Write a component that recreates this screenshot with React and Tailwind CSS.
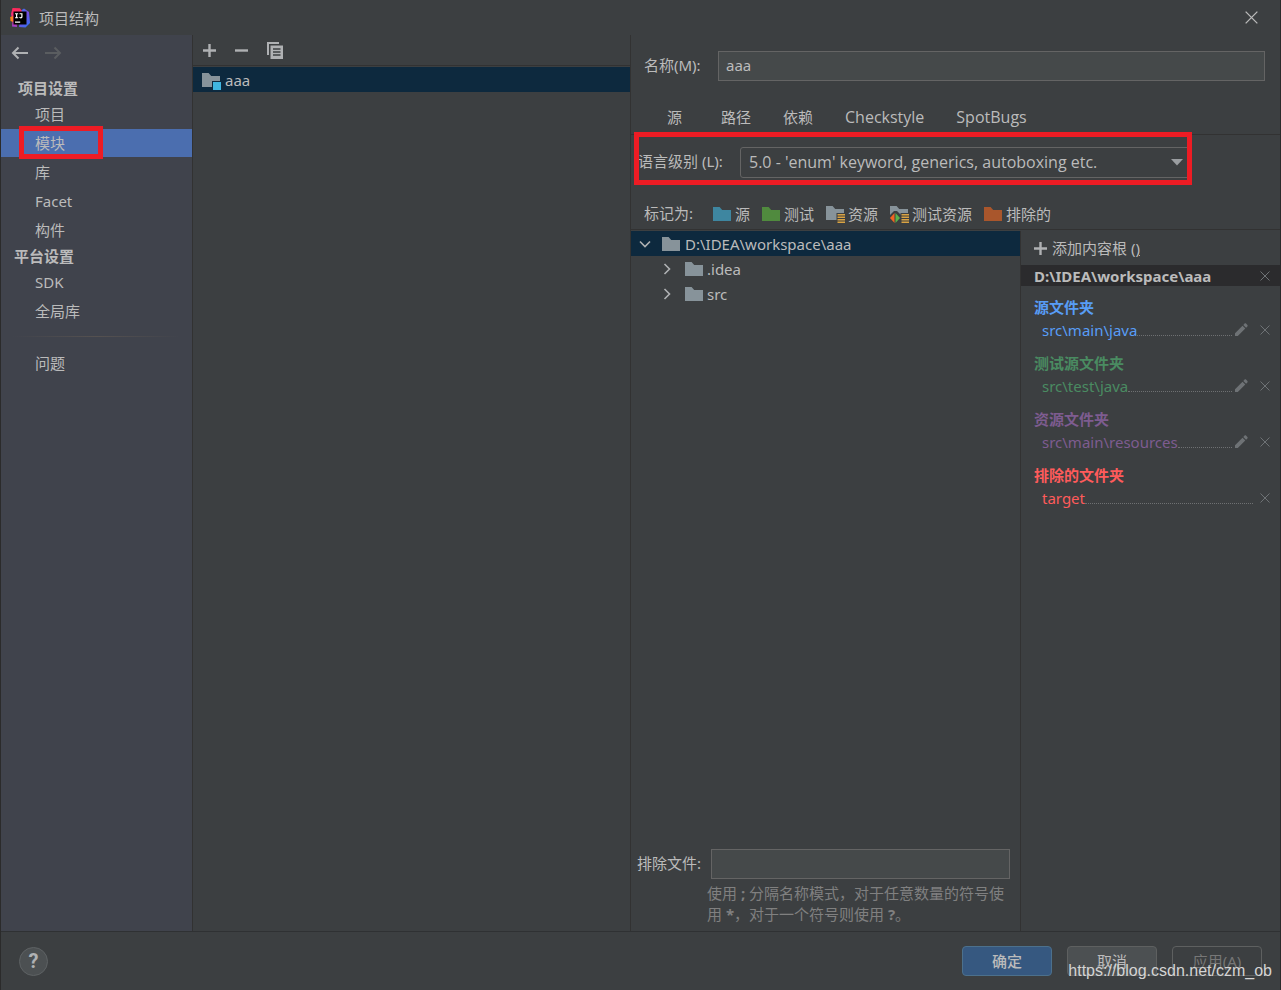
import React, { useState } from "react";

const FOLDER = "M0 0h6.6l2.6 3H18v11H0z";

function Folder({ className }) {
  return (
    <svg width="20" height="20" viewBox="0 0 20 20" className={"shrink-0 " + className} aria-hidden="true">
      <path d={FOLDER} transform="translate(0 3)" fill="currentColor" />
    </svg>
  );
}

function Bars() {
  return (
    <g transform="translate(0 1)">
      <path d="M10.5 8H20V19H10.5z" fill="#3c3f41" />
      <path d="M11.5 9H19v1.5h-7.500zM11.5 11.500H19V13h-7.500zM11.5 14H19v1.500h-7.500zM11.5 16.500H19V18h-7.500z" fill="#d9a343" />
    </g>
  );
}

function ResourceFolder() {
  return (
    <svg width="20" height="20" viewBox="0 0 20 20" className="shrink-0 text-[#87939a]" aria-hidden="true">
      <path d={FOLDER} transform="translate(0 2)" fill="currentColor" />
      <Bars />
    </svg>
  );
}

function TestResourceFolder() {
  return (
    <svg width="20" height="20" viewBox="0 0 20 20" className="shrink-0 text-[#87939a]" aria-hidden="true">
      <path d={FOLDER} transform="translate(0 2)" fill="currentColor" />
      <path d="M0 11L4 7h3l4 4v9H0z" fill="#3c3f41" />
      <path d="M0 14l4.500-5v10z" fill="#f26522" />
      <path d="M10 14l-4.500-5v10z" fill="#59b24a" />
      <Bars />
    </svg>
  );
}

function ModuleFolder() {
  return (
    <svg width="20" height="20" viewBox="0 0 20 20" className="shrink-0" aria-hidden="true">
      <path d={FOLDER} transform="translate(0 3)" fill="#87939a" />
      <path d="M10 11h10v9H10z" fill="#0d293e" />
      <path d="M11 12h8v8h-8z" fill="#40b6e0" />
    </svg>
  );
}

function Logo() {
  return (
    <svg width="20" height="20" viewBox="0 0 20 20" className="shrink-0" aria-hidden="true">
      <defs>
        <linearGradient id="ideaBlue" x1="0" y1="0" x2="0.6" y2="1">
          <stop offset="0" stopColor="#2a7df0" />
          <stop offset="0.5" stopColor="#7a4be0" />
          <stop offset="1" stopColor="#3b6bf2" />
        </linearGradient>
        <linearGradient id="ideaPink" x1="0" y1="0" x2="0" y2="1">
          <stop offset="0" stopColor="#fe2857" />
          <stop offset="0.6" stopColor="#f0308a" />
          <stop offset="1" stopColor="#9a3fd0" />
        </linearGradient>
      </defs>
      <path d="M11 2.500L14 .5l5 3.500 1 11-4.500 4.500L9 19z" fill="url(#ideaBlue)" />
      <path d="M2.500 0L10 .3l2 3-6 6 1 9.700-5-.5L2.500 13 1 6z" fill="url(#ideaPink)" />
      <path d="M.2 9l3-1v6L.5 13z" fill="#fc801d" />
      <path d="M3.500 3.500h13v13h-13z" fill="#000" />
      <path d="M5 5.200h3.200v1H7.200v3.100h1v1H5v-1h1V6.200H5zM9.500 5.200h3v3.500c0 1.100-.7 1.700-1.700 1.700-.8 0-1.300-.3-1.700-.8l.8-.8c.2.300.5.500.8.500.4 0 .6-.2.6-.7V6.200H9.500zM5 13.600h5.200v1.100H5z" fill="#fff" />
    </svg>
  );
}

function Cross({ size = 10, className = "text-[#6e7275]" }) {
  return (
    <svg width={size} height={size} viewBox="0 0 10 10" className={className} aria-hidden="true">
      <path d="M.5.5l9 9M9.500.5l-9 9" stroke="currentColor" strokeWidth="1" fill="none" />
    </svg>
  );
}

function Plus() {
  return (
    <svg width="13" height="13" viewBox="0 0 13 13" className="shrink-0" aria-hidden="true">
      <path d="M6.500 0v13M0 6.500h13" stroke="#afb1b3" strokeWidth="2.400" />
    </svg>
  );
}

function Pencil() {
  return (
    <svg width="14" height="14" viewBox="0 0 14 14" className="text-[#6e7275]" aria-hidden="true">
      <path d="M1 10.200L8.500 2.700l2.800 2.800L3.800 13H1zM9.300 1.900L10.600.6c.4-.4 1-.4 1.400 0l1.400 1.400c.4.400.4 1 0 1.400l-1.300 1.300z" fill="currentColor" />
    </svg>
  );
}

function Arrow({ flip, className }) {
  return (
    <svg width="18" height="14" viewBox="0 0 18 14" className={className} aria-hidden="true">
      <path
        d={flip ? "M1 7h15M10.500 1.500L16 7l-5.500 5.500" : "M17 7H2M7.500 1.500L2 7l5.500 5.500"}
        stroke="currentColor"
        strokeWidth="2"
        fill="none"
      />
    </svg>
  );
}

function Chevron({ open }) {
  return (
    <svg width="12" height="12" viewBox="0 0 12 12" className="shrink-0" aria-hidden="true">
      <path d={open ? "M1 3.500l5 5 5-5" : "M3.500 1l5 5-5 5"} stroke="#afb1b3" strokeWidth="1.600" fill="none" />
    </svg>
  );
}

function NavItem({ label, selected, onSelect }) {
  return (
    <button
      type="button"
      onClick={onSelect}
      aria-current={selected ? "page" : undefined}
      className={"relative flex h-7 w-full items-center pl-[34px] text-left " + (selected ? "bg-[#4b6eaf]" : "")}
    >
      {label}
      {selected && <span className="pointer-events-none absolute -top-[3px] left-[18px] h-[33px] w-[84px] border-5 border-[#ed1c24]" />}
    </button>
  );
}

const TABS = [
  { label: "源", size: "text-[15px]" },
  { label: "路径", size: "text-[15px]" },
  { label: "依赖", size: "text-[15px]" },
  { label: "Checkstyle", size: "text-base" },
  { label: "SpotBugs", size: "text-base" },
];

const MARKS = [
  { label: "源", icon: <Folder className="text-[#3e86a0]" /> },
  { label: "测试", icon: <Folder className="text-[#508a3e]" /> },
  { label: "资源", icon: <ResourceFolder /> },
  { label: "测试资源", icon: <TestResourceFolder /> },
  { label: "排除的", icon: <Folder className="text-[#a9562c]" /> },
];

const ROOTS = [
  { title: "源文件夹", path: "src\\main\\java", color: "text-[#589df6]", editable: true },
  { title: "测试源文件夹", path: "src\\test\\java", color: "text-[#4a8b61]", editable: true },
  { title: "资源文件夹", path: "src\\main\\resources", color: "text-[#7e5c90]", editable: true },
  { title: "排除的文件夹", path: "target", color: "text-[#ff5b5b]", editable: false },
];

export default function App() {
  const [page, setPage] = useState("模块");
  const nav = (label) => <NavItem key={label} label={label} selected={page === label} onSelect={() => setPage(label)} />;

  return (
    <div className="relative flex min-h-screen flex-col border-x border-[#2b2b2b] bg-[#3c3f41] font-['Noto_Sans','Noto_Sans_CJK_SC',sans-serif] text-[15px] leading-5 text-[#bbbbbb]">
      <header className="flex h-[35px] items-center pr-[22px] pl-[9px]">
        <Logo />
        <h1 className="ml-[9px]">项目结构</h1>
        <button type="button" aria-label="关闭" className="ml-auto">
          <Cross size={13} className="text-[#bbbbbb]" />
        </button>
      </header>

      <div className="flex grow">
        <nav className="flex w-[192px] shrink-0 flex-col border-r border-[#323232] bg-[#40434c]">
          <div className="flex h-[41px] items-start gap-[15px] pt-[11px] pl-[10px]">
            <button type="button" aria-label="后退">
              <Arrow className="text-[#afb1b3]" />
            </button>
            <button type="button" aria-label="前进" disabled>
              <Arrow flip className="text-[#5a5d60]" />
            </button>
          </div>
          <h2 className="flex h-6 items-center pl-[17px] font-bold">项目设置</h2>
          <div className="flex flex-col gap-px">{["项目", "模块", "库", "Facet", "构件"].map(nav)}</div>
          <h2 className="flex h-6 items-center pl-[13px] font-bold">平台设置</h2>
          <div className="flex flex-col gap-px">{["SDK", "全局库"].map(nav)}</div>
          <div className="mx-3 mt-[11px] mb-3 h-px bg-linear-to-r from-transparent via-[#555150] to-transparent" />
          {nav("问题")}
        </nav>

        <section className="flex flex-1 flex-col border-r border-[#323232]">
          <div className="flex h-[31px] items-center gap-[19px] border-b border-[#323232] pl-[10px]">
            <button type="button" aria-label="添加">
              <Plus />
            </button>
            <button type="button" aria-label="移除">
              <svg width="13" height="13" viewBox="0 0 13 13" aria-hidden="true">
                <path d="M0 6.500h13" stroke="#afb1b3" strokeWidth="2.400" />
              </svg>
            </button>
            <button type="button" aria-label="复制">
              <svg width="16" height="17" viewBox="0 0 16 17" aria-hidden="true">
                <path d="M0 0h12v2H2v11H0z" fill="#afb1b3" />
                <path d="M3.500 3.500H16V17H3.500z" fill="#afb1b3" />
                <path d="M6 7h7.500M6 10h7.500M6 13h7.500" stroke="#3c3f41" strokeWidth="1.400" />
              </svg>
            </button>
          </div>
          <ul className="mt-px">
            <li className="flex h-[25px] items-center gap-[3px] bg-[#0d293e] pl-[9px]">
              <ModuleFolder />
              aaa
            </li>
          </ul>
        </section>

        <main className="flex w-[649px] shrink-0 flex-col">
          <div className="flex items-center pt-4 pr-[15px] pl-[13px]">
            <label htmlFor="module-name" className="w-[74px] shrink-0 pb-[2px]">
              名称(M):
            </label>
            <input
              id="module-name"
              defaultValue="aaa"
              className="h-[30px] min-w-0 grow border border-[#646464] bg-[#45494a] px-[7px] pb-[2px] outline-none"
            />
          </div>

          <div role="tablist" className="mt-[19px] flex h-[35px] items-center gap-8 border-b border-[#323232] pl-9 font-['Open_Sans','Noto_Sans_CJK_SC',sans-serif]">
            {TABS.map((t) => (
              <button key={t.label} type="button" role="tab" className={"min-w-[22px] text-left leading-5 " + t.size}>
                {t.label}
              </button>
            ))}
          </div>

          <div className="relative flex h-[55px] items-center pr-[90px] pl-[7px]">
            <label htmlFor="language-level" className="w-[102px] shrink-0 pb-1">
              语言级别 (L):
            </label>
            <div className="relative grow">
              <select
                id="language-level"
                className="block h-[31px] w-full appearance-none rounded-[3px] border border-[#646464] bg-[#3c3f41] pr-8 pb-[2px] pl-2 font-['Open_Sans',sans-serif] text-base leading-5 outline-none"
              >
                <option>5.0 - 'enum' keyword, generics, autoboxing etc.</option>
              </select>
              <svg width="12" height="7" viewBox="0 0 12 7" className="pointer-events-none absolute top-3 right-[7px]" aria-hidden="true">
                <path d="M0 0h12L6 6.500z" fill="#9a9da0" />
              </svg>
            </div>
            <span className="pointer-events-none absolute -top-[3px] right-[88px] left-[3px] h-[53px] border-5 border-[#ed1c24]" />
          </div>

          <div className="flex h-10 items-center gap-3 border-b border-[#323232] pt-2 pl-[13px]">
            <span className="mr-2 pb-[2px]">标记为:</span>
            {MARKS.map((m) => (
              <button key={m.label} type="button" className="flex items-center gap-[2px]">
                {m.icon}
                {m.label}
              </button>
            ))}
          </div>

          <div className="mt-px flex grow">
            <div className="flex w-[390px] shrink-0 flex-col border-r border-[#323232]">
              <ul role="tree">
                <li role="treeitem" aria-expanded="true" className="flex h-[25px] items-center bg-[#0d293e] pl-2">
                  <Chevron open />
                  <Folder className="mr-[3px] ml-[11px] text-[#87939a]" />
                  D:\IDEA\workspace\aaa
                </li>
                {[".idea", "src"].map((name) => (
                  <li key={name} role="treeitem" aria-expanded="false" className="flex h-[25px] items-center pl-[30px]">
                    <Chevron />
                    <Folder className="mr-[2px] ml-3 text-[#87939a]" />
                    {name}
                  </li>
                ))}
              </ul>
              <div className="mt-auto pb-[6px]">
                <div className="flex items-center pr-[10px] pl-[6px]">
                  <label htmlFor="exclude-files" className="w-[74px] shrink-0 pb-[2px]">
                    排除文件:
                  </label>
                  <input
                    id="exclude-files"
                    className="h-[30px] min-w-0 grow border border-[#646464] bg-[#45494a] px-[7px] outline-none"
                  />
                </div>
                <p className="mt-1 pr-2 pl-[76px] leading-[21px] text-[#808080]">
                  使用 <b>;</b> 分隔名称模式，对于任意数量的符号使用 <b>*</b>，对于一个符号则使用 <b>?</b>。
                </p>
              </div>
            </div>

            <aside className="flex grow flex-col">
              <button type="button" className="flex h-[34px] items-center gap-[5px] pl-[13px]">
                <Plus />
                <span>
                  添加内容根 (<u>)</u>
                </span>
              </button>
              <div className="flex h-[21px] items-center justify-between bg-[#2b2b2d] pr-[10px] pl-[13px] font-bold">
                D:\IDEA\workspace\aaa
                <button type="button" aria-label="移除内容根">
                  <Cross />
                </button>
              </div>
              <div className="flex flex-col gap-3 pt-[11px] pr-[10px] pl-[13px]">
                {ROOTS.map((r) => (
                  <section key={r.title} className={r.color}>
                    <h3 className="h-[22px] font-bold">{r.title}</h3>
                    <div className="flex h-[22px] items-center pl-2">
                      <a href="#" onClick={(e) => e.preventDefault()}>
                        {r.path}
                      </a>
                      <span className="mt-[10px] grow border-b border-dotted border-[#6e7072]" />
                      {r.editable && (
                        <button type="button" aria-label="编辑" className="ml-[2px]">
                          <Pencil />
                        </button>
                      )}
                      <button type="button" aria-label="移除" className={r.editable ? "ml-3" : "ml-[7px]"}>
                        <Cross />
                      </button>
                    </div>
                  </section>
                ))}
              </div>
            </aside>
          </div>
        </main>
      </div>

      <footer className="flex h-[59px] items-center border-t border-[#2f3133] pr-[18px] pl-[18px]">
        <button
          type="button"
          aria-label="帮助"
          className="flex size-[29px] items-center justify-center rounded-full border border-[#5e6264] bg-[#4c5052] font-['Roboto'] text-xl font-bold text-[#afb1b3]"
        >
          ?
        </button>
        <div className="ml-auto flex gap-[15px]">
          <button type="button" className="h-[30px] w-[90px] rounded-[4px] border border-[#4c708c] bg-[#365880] font-medium">
            确定
          </button>
          <button type="button" className="h-[30px] w-[90px] rounded-[4px] border border-[#5e6060] bg-[#4c5052]">
            取消
          </button>
          <button type="button" disabled className="h-[30px] w-[90px] rounded-[4px] border border-[#5e6060] text-[#777777]">
            应用(A)
          </button>
        </div>
      </footer>
      <span className="pointer-events-none absolute right-2 bottom-[7px] font-['Liberation_Sans',sans-serif] text-base text-[#d4d4d4]">
        https://blog.csdn.net/czm_ob
      </span>
    </div>
  );
}
